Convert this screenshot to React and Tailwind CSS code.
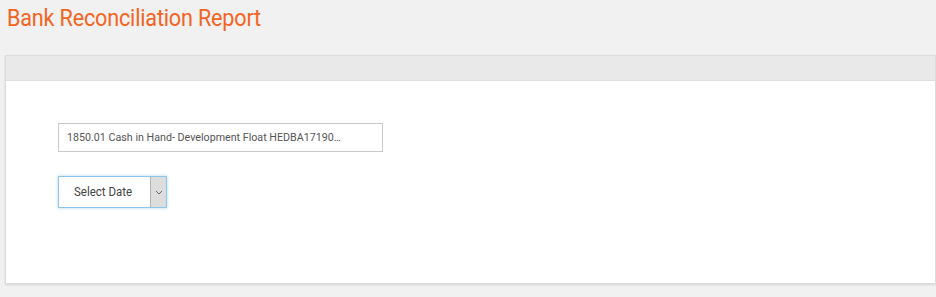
export default function App() {
  return (
    <div className="w-[936px] h-[297px] bg-[#f1f1f1] overflow-hidden" style={{ fontFamily: 'Roboto, "Liberation Sans", sans-serif' }}>
      {/* Title */}
      <div className="pl-[7px] pt-[5px] h-[55px]">
        <h1 className="text-[23px] leading-[27px] text-[#f26522] tracking-[-0.2px] scale-x-[0.94] origin-left whitespace-nowrap">
          Bank Reconciliation Report
        </h1>
      </div>

      {/* Card */}
      <div className="ml-[5px] w-[931px] border border-[#dcdcdc] shadow-[0_1px_2px_rgba(0,0,0,0.12)]">
        <div className="h-[25px] bg-[#e9e9e9] border-b border-[#dedede]" />
        <div className="bg-white h-[202px] pt-[42px] pl-[52px]">
          <div className="w-[325px] h-[29px] border border-[#c9c9c9] flex items-center pl-[8px]">
            <span className="text-[11.5px] text-[#555] scale-x-[0.93] origin-left whitespace-nowrap">
              1850.01 Cash in Hand- Development Float HEDBA17190…
            </span>
          </div>
          <div className="mt-[24px] w-[109px] h-[32px] border border-[#8ec3ea] flex shadow-[0_0_3px_rgba(102,175,233,0.5)]">
            <div className="flex-1 flex items-center pl-[15px]">
              <span className="text-[12.5px] text-[#444] scale-x-[0.92] origin-left whitespace-nowrap">Select Date</span>
            </div>
            <div className="w-[16px] bg-[#dddddd] border-l border-[#b5b5b5] flex items-center justify-center">
              <svg width="8" height="5" viewBox="0 0 8 5" fill="none" stroke="#666" strokeWidth="1">
                <path d="M1 1l3 3 3-3" />
              </svg>
            </div>
          </div>
        </div>
      </div>
    </div>
  )
}
